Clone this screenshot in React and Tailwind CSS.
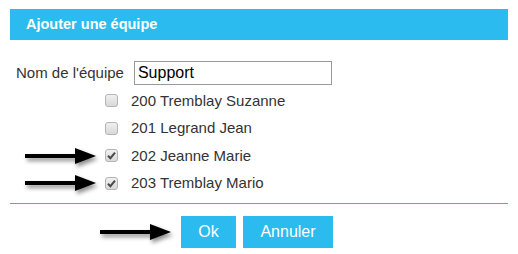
import React from 'react';

const Arrow = () => (
    <svg width="72" height="20" viewBox="0 0 72 20" className="drop-shadow-[2px_3px_2px_rgba(0,0,0,0.45)]">
        <rect x="0" y="8" width="54" height="4" fill="#000" />
        <polygon points="50,2 71,10 50,18" fill="#000" />
    </svg>
);

const Checkbox = ({ checked }) => (
    <span className="w-[13px] h-[13px] rounded-[3px] border border-[#b4b4b4] bg-gradient-to-b from-[#f0f0f0] to-[#d8d8d8] flex items-center justify-center">
        {checked && (
            <svg width="9" height="9" viewBox="0 0 9 9">
                <path d="M1 4.8 L3.4 7.2 L8 1.6" stroke="#4a4a4a" strokeWidth="2" fill="none" />
            </svg>
        )}
    </span>
);

const members = [
    { label: '200 Tremblay Suzanne', checked: false },
    { label: '201 Legrand Jean', checked: false },
    { label: '202 Jeanne Marie', checked: true },
    { label: '203 Tremblay Mario', checked: true },
];

export default function App() {
    return (
        <div className="w-[518px] h-[254px] bg-white pt-[9px] px-[10px] font-['Liberation_Sans',Arial,sans-serif] text-[#333]">
            <div className="h-[31px] bg-[#2bbbee] flex items-center pl-4 text-white font-bold text-[14.5px]">
                Ajouter une équipe
            </div>

            <div className="mt-[21px] pl-[6px] flex items-center">
                <span className="text-[15px]">Nom de l'équipe</span>
                <input
                    type="text"
                    defaultValue="Support"
                    className="ml-[10px] w-[198px] h-[24px] border border-[#999] px-[3px] text-[16px] text-black outline-none"
                />
            </div>

            <div className="mt-[2px] flex flex-col">
                {members.map((m) => (
                    <div key={m.label} className="h-[27.5px] flex items-center pl-[15px]">
                        <div className="w-[72px] h-[20px]">{m.checked && <Arrow />}</div>
                        <div className="ml-[8px]">
                            <Checkbox checked={m.checked} />
                        </div>
                        <span className="ml-[13px] text-[15px]">{m.label}</span>
                    </div>
                ))}
            </div>

            <div className="mt-[6px] h-px bg-[#2ab8ec]" />

            <div className="mt-[12px] flex items-center pl-[90px]">
                <Arrow />
                <button className="ml-[9px] w-[55px] h-[32px] bg-[#2bbbee] text-white text-[16px]">Ok</button>
                <button className="ml-[7px] w-[90px] h-[32px] bg-[#2bbbee] text-white text-[16px]">Annuler</button>
            </div>
        </div>
    );
}
